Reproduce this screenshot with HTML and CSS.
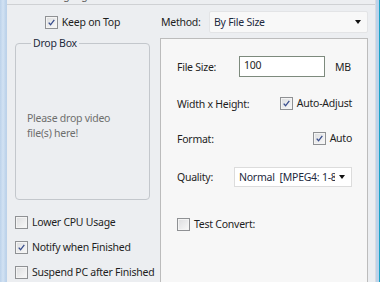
FILE: index.html
```html
<!DOCTYPE html>
<html lang="en">
<head>
  <meta charset="UTF-8">
  <meta name="viewport" content="width=device-width, initial-scale=1.0">
  <title>Converter Settings</title>
  <link rel="stylesheet" href="styles.css">
</head>
<body>
  <div class="window">
    <div class="dialog">
      <div class="tabline"><span>Language</span></div>
      <div class="columns">
        <div class="left">
          <label class="check keep">
            <span class="box"><svg viewBox="0 0 13 13"><path d="M3.2 6.6 L5.4 9.2 L9.8 3.4"/></svg></span>
            Keep on Top
          </label>
          <fieldset class="dropbox">
            <legend>Drop Box</legend>
            <p>Please drop video file(s) here!</p>
          </fieldset>
          <div class="options">
            <label class="check"><span class="box"></span>Lower CPU Usage</label>
            <label class="check">
              <span class="box"><svg viewBox="0 0 13 13"><path d="M3.2 6.6 L5.4 9.2 L9.8 3.4"/></svg></span>
              Notify when Finished
            </label>
            <label class="check"><span class="box"></span>Suspend PC after Finished</label>
          </div>
        </div>

        <div class="right">
          <div class="method-row">
            <span class="method-label">Method:</span>
            <div class="select method-select">By File Size<span class="arrow"></span></div>
          </div>
          <div class="panel">
            <div class="row size-row">
              <span class="size-label">File Size:</span>
              <div class="input">100</div>
              <span class="unit">MB</span>
            </div>
            <div class="row split wh-row">
              <span>Width x Height:</span>
              <label class="check">
                <span class="box"><svg viewBox="0 0 13 13"><path d="M3.2 6.6 L5.4 9.2 L9.8 3.4"/></svg></span>
                Auto-Adjust
              </label>
            </div>
            <div class="row split format-row">
              <span>Format:</span>
              <label class="check">
                <span class="box"><svg viewBox="0 0 13 13"><path d="M3.2 6.6 L5.4 9.2 L9.8 3.4"/></svg></span>
                Auto
              </label>
            </div>
            <div class="row quality-row">
              <span class="quality-label">Quality:</span>
              <div class="select quality-select"><span class="clip">Normal&nbsp;&nbsp;[MPEG4: 1-800 kbps]</span><span class="arrow"></span></div>
            </div>
            <div class="row test-row">
              <label class="check"><span class="box"></span>Test Convert:</label>
            </div>
          </div>
        </div>
      </div>
    </div>
  </div>
</body>
</html>
```

FILE: styles.css
```css
body {
  margin: 0;
  padding: 0;
  font-family: 'Noto Sans', 'Open Sans', sans-serif;
  font-size: 10.5px;
  letter-spacing: -0.25px;
  color: #1e1e1e;
  overflow: hidden;
}

.window {
  height: 282px;
  display: flex;
  background: linear-gradient(90deg, #bcd2ea 0, #d2e2f3 3px, #bcd2ea 6px);
  padding-left: 7px;
  padding-right: 7px;
  position: relative;
}

.window::after {
  content: '';
  position: absolute;
  top: 0;
  right: 0;
  width: 1px;
  height: 100%;
  background: #1aa3c6;
}

.dialog {
  flex: 1;
  display: flex;
  flex-direction: column;
  background: #eceef1;
  border-right: 1px solid #d9dce1;
}

.tabline {
  height: 4px;
  overflow: hidden;
  border-bottom: 1px solid #cfd1d4;
  padding-left: 39px;
  color: #666;
}

.tabline span {
  display: block;
  line-height: 14px;
  margin-top: -12px;
}

.columns {
  flex: 1;
  display: flex;
  padding-left: 8px;
  padding-right: 7px;
  gap: 10px;
}

/* checkboxes */
.check {
  display: flex;
  align-items: center;
  gap: 4px;
  height: 13px;
  line-height: 13px;
  white-space: nowrap;
}

.box {
  width: 11px;
  height: 11px;
  border: 1px solid #8f9194;
  background: linear-gradient(135deg, #dcdddf, #f9f9f9);
  box-shadow: inset 0 0 0 1px #f4f4f4;
  flex-shrink: 0;
}

.box svg {
  display: block;
  width: 11px;
  height: 11px;
}

.box path {
  fill: none;
  stroke: #3a4f8e;
  stroke-width: 1.6;
}

/* left column */
.left {
  width: 135px;
  display: flex;
  flex-direction: column;
}

.keep {
  margin-top: 11px;
  justify-content: center;
}

.dropbox {
  margin: 7px 0 0;
  padding: 0 0 0 11px;
  height: 162px;
  border: 1px solid #c3c7cc;
  border-radius: 4px;
}

.dropbox legend {
  padding: 0 2px;
  margin-left: 4px;
  line-height: 14px;
  color: #1e2a3c;
}

.dropbox p {
  margin: 61px 0 0;
  line-height: 15px;
  color: #6e6e6e;
  width: 100px;
}

.options {
  margin-top: 16px;
  display: flex;
  flex-direction: column;
  gap: 12px;
}

/* right column */
.right {
  flex: 1;
  display: flex;
  flex-direction: column;
}

.method-row {
  margin-top: 6px;
  display: flex;
  align-items: center;
  height: 22px;
}

.method-label {
  width: 48px;
  padding-left: 1px;
}

.select {
  position: relative;
  display: flex;
  align-items: center;
  padding-left: 4px;
  box-sizing: border-box;
  color: #1e2a40;
}

.method-select {
  flex: 1;
  height: 22px;
  background: #f8f8f8;
  border: 1px solid #e3e4e6;
  border-radius: 2px;
}

.arrow {
  position: absolute;
  right: 6px;
  top: 50%;
  margin-top: -2px;
  width: 0;
  height: 0;
  border-left: 3.5px solid transparent;
  border-right: 3.5px solid transparent;
  border-top: 4px solid #111;
}

.panel {
  margin-top: 5px;
  flex: 1;
  background: #f7f7f7;
  border: 1px solid #bcbcbc;
  border-bottom: none;
  padding: 17px 15px 0 16px;
}

.row {
  display: flex;
  align-items: center;
}

.split {
  justify-content: space-between;
  height: 13px;
}

.size-row {
  height: 21px;
}

.size-label {
  width: 62px;
}

.input {
  width: 86px;
  height: 21px;
  box-sizing: border-box;
  border: 1px solid #7d8a7d;
  background: #fff;
  padding-left: 4px;
  line-height: 17px;
}

.unit {
  margin-left: 10px;
}

.wh-row {
  margin-top: 20px;
}

.format-row {
  margin-top: 22px;
}

.quality-row {
  margin-top: 22px;
  height: 20px;
}

.quality-label {
  width: 57px;
}

.quality-select {
  width: 118px;
  height: 20px;
  background: #fff;
  border: 1px solid #dcdcdc;
  padding-right: 16px;
}

.clip {
  overflow: hidden;
  white-space: nowrap;
}

.test-row {
  margin-top: 31px;
}
```
